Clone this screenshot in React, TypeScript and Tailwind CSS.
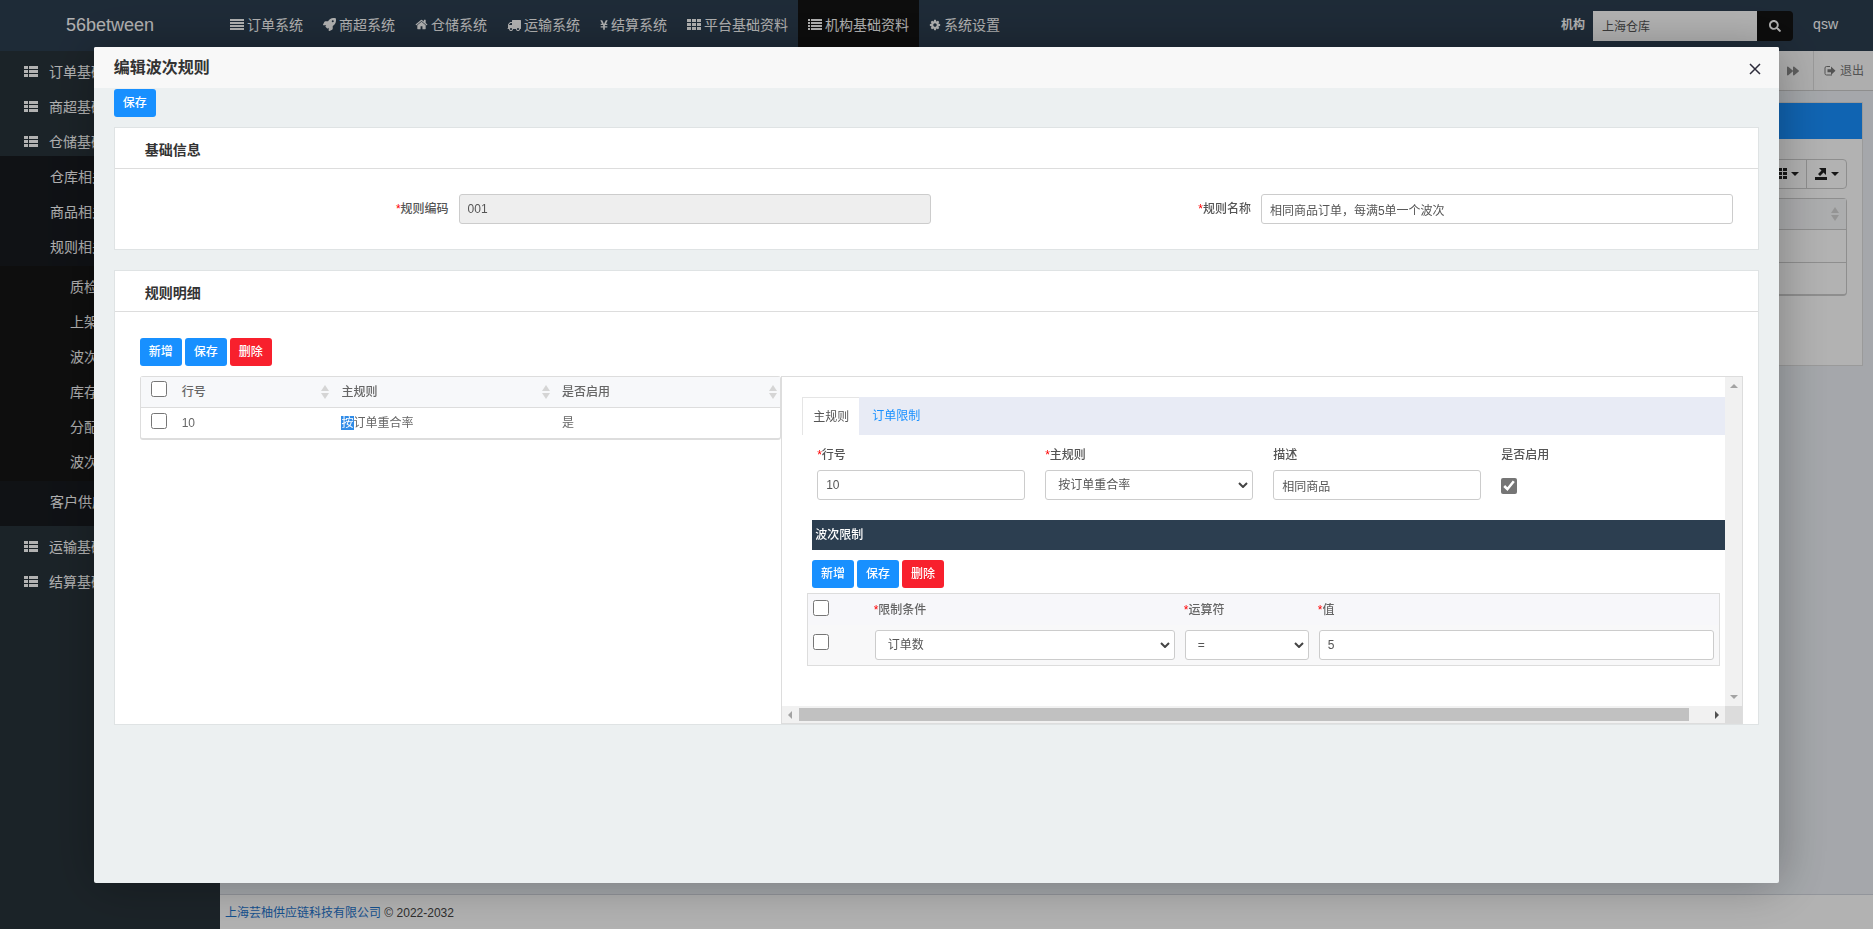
import React, { useState } from 'react';
import type { ReactNode } from 'react';
import { FaForward, FaRocket, FaSearch, FaYenSign } from 'react-icons/fa';

const ICON_PATHS = {
    home: 'M1472 992v480q0 26-19 45t-45 19h-384v-384h-256v384h-384q-26 0-45-19t-19-45v-480q0-1 .5-3t.5-3l575-474 575 474q1 2 1 6zm223-69l-62 74q-8 9-21 11h-3q-13 0-21-7l-692-577-692 577q-12 8-24 7-13-2-21-11l-62-74q-8-10-7-23.5t11-21.5l719-599q32-26 76-26t76 26l244 204v-195q0-14 9-23t23-9h192q14 0 23 9t9 23v408l219 182q10 8 11 21.5t-7 23.5z',
    truck: 'M640 1408q0-52-38-90t-90-38-90 38-38 90 38 90 90 38 90-38 38-90zm-384-512h384v-256h-158q-13 0-22 9l-195 195q-9 9-9 22v30zm1280 512q0-52-38-90t-90-38-90 38-38 90 38 90 90 38 90-38 38-90zm256-1088v1024q0 15-4 26.5t-13.5 18.5-16.5 11.5-23.5 6-22.5 2-25.5 0-22.5-.5q0 106-75 181t-181 75-181-75-75-181h-384q0 106-75 181t-181 75-181-75-75-181h-64q-3 0-22.5.5t-25.5 0-22.5-2-23.5-6-16.5-11.5-13.5-18.5-4-26.5q0-26 19-45t45-19v-320q0-8-.5-35t0-38 2.5-34.5 6.5-37 14-30.5 22.5-30l198-198q19-19 50.5-32t58.5-13h160v-192q0-26 19-45t45-19h1024q26 0 45 19t19 45z',
    cog: 'M1152 896q0-106-75-181t-181-75-181 75-75 181 75 181 181 75 181-75 75-181zm512-109v222q0 12-8 23t-20 13l-185 28q-19 54-39 91 35 50 107 138 10 12 10 25t-9 23q-27 37-99 108t-94 71q-12 0-26-9l-138-108q-44 23-91 38-16 136-29 186-7 28-36 28h-222q-14 0-24.5-8.5t-11.5-21.5l-28-184q-49-16-90-37l-141 107q-10 9-25 9-14 0-25-11-126-114-165-168-7-10-7-23 0-12 8-23 15-21 51-66.5t54-70.5q-27-50-41-99l-183-27q-13-2-21-12.5t-8-23.5v-222q0-12 8-23t19-13l186-28q14-46 39-92-40-57-107-138-10-12-10-24 0-10 9-23 26-36 98.5-107.5t94.5-71.5q13 0 26 10l138 107q44-23 91-38 16-136 29-186 7-28 36-28h222q14 0 24.5 8.5t11.5 21.5l28 184q49 16 90 37l142-107q9-9 24-9 13 0 25 10 129 119 165 170 7 8 7 22 0 12-8 23-15 21-51 66.5t-54 70.5q26 50 41 98l183 28q13 2 21 12.5t8 23.5z',
};

const GlyphIcon = ({ name, className }: { name: keyof typeof ICON_PATHS; className: string }) => (
    <svg viewBox="0 0 1792 1792" fill="currentColor" className={className}>
        <path d={ICON_PATHS[name]} />
    </svg>
);

const JustifyIcon = () => (
    <svg viewBox="0 0 14 14" fill="currentColor" className="size-[14px]">
        <path d="M0 1h14v2H0zM0 4h14v2H0zM0 7h14v2H0zM0 10h14v2H0z" />
    </svg>
);

const ListIcon = () => (
    <svg viewBox="0 0 14 14" fill="currentColor" className="size-[14px]">
        <path d="M0 1h2v2H0zM3 1h11v2H3zM0 4h2v2H0zM3 4h11v2H3zM0 7h2v2H0zM3 7h11v2H3zM0 10h2v2H0zM3 10h11v2H3z" />
    </svg>
);

const GridIcon = () => (
    <svg viewBox="0 0 14 14" fill="currentColor" className="size-[14px]">
        <path d="M0 1h4v3H0zM5 1h4v3H5zM10 1h4v3h-4zM0 5h4v3H0zM5 5h4v3H5zM10 5h4v3h-4zM0 9h4v3H0zM5 9h4v3H5zM10 9h4v3h-4z" />
    </svg>
);

const ThListIcon = () => (
    <svg viewBox="0 0 14 14" fill="currentColor" className="size-[14px]">
        <path d="M0 1h4v3H0zM5 1h9v3H5zM0 5h4v3H0zM5 5h9v3H5zM0 9h4v3H0zM5 9h9v3H5z" />
    </svg>
);

const SortIcon = () => (
    <svg viewBox="0 0 8 14" fill="currentColor" className="h-[14px] w-2 text-[#d5d5d5]">
        <path d="M4 0l4 6H0zM4 14l4-6H0z" />
    </svg>
);

const Caret = () => (
    <svg viewBox="0 0 8 4" fill="currentColor" className="h-1 w-2">
        <path d="M0 0h8L4 4z" />
    </svg>
);

const navItems: { label: string; icon: ReactNode; active?: boolean }[] = [
    { label: '订单系统', icon: <JustifyIcon /> },
    { label: '商超系统', icon: <FaRocket className="size-[13px]" /> },
    { label: '仓储系统', icon: <GlyphIcon name="home" className="size-[13px]" /> },
    { label: '运输系统', icon: <GlyphIcon name="truck" className="size-[14px]" /> },
    { label: '结算系统', icon: <FaYenSign className="h-3 w-2" /> },
    { label: '平台基础资料', icon: <GridIcon /> },
    { label: '机构基础资料', icon: <ListIcon />, active: true },
    { label: '系统设置', icon: <GlyphIcon name="cog" className="size-3" /> },
];

const itemClass = 'flex w-full items-center pt-[11px] pb-1 leading-5 whitespace-nowrap';

function MainItem({ label }: { label: string }) {
    return (
        <a href="#" className={`${itemClass} gap-[11px] pl-6`}>
            <ThListIcon />
            {label}
        </a>
    );
}

function SubItem({ label }: { label: string }) {
    return (
        <a href="#" className={`${itemClass} pl-[50px]`}>
            {label}
        </a>
    );
}

function Sidebar() {
    const rules = ['质检规则', '上架规则', '波次规则', '库存规则', '分配规则', '波次策略'];

    return (
        <aside className="w-[220px] shrink-0 bg-[#28333a] text-sm text-white">
            <MainItem label="订单基础" />
            <MainItem label="商超基础" />
            <MainItem label="仓储基础" />
            <div className="bg-[#171a1f] pb-[10px]">
                <SubItem label="仓库相关" />
                <SubItem label="商品相关" />
                <SubItem label="规则相关" />
                <div className="mt-[5px] bg-[#151515] pb-[5px]">
                    {rules.map(rule => (
                        <a key={rule} href="#" className={`${itemClass} pl-[70px]`}>
                            {rule}
                        </a>
                    ))}
                </div>
                <SubItem label="客户供应商" />
            </div>
            <MainItem label="运输基础" />
            <MainItem label="结算基础" />
        </aside>
    );
}

function TopNav() {
    return (
        <header className="flex h-[51px] shrink-0 items-stretch bg-[#2c3e50] text-sm text-white">
            <a href="#" className="flex w-[220px] items-center justify-center pb-[2px] text-lg">
                56between
            </a>
            <nav className="flex">
                {navItems.map(item => (
                    <a
                        key={item.label}
                        href="#"
                        className={
                            item.active
                                ? 'flex items-center gap-[3px] bg-[#131313] px-[10px] pb-[2px]'
                                : 'flex items-center gap-[3px] px-[10px] pb-[2px]'
                        }
                    >
                        {item.icon}
                        {item.label}
                    </a>
                ))}
            </nav>
            <div className="ml-auto flex items-center pr-[35px]">
                <label htmlFor="org" className="pr-2 pb-[2px] text-xs font-bold">
                    机构
                </label>
                <input
                    id="org"
                    defaultValue="上海仓库"
                    className="h-[30px] w-[164px] bg-white px-[9px] text-xs text-[#555]"
                />
                <button
                    aria-label="搜索"
                    className="flex h-[30px] w-9 items-center justify-center rounded-r-sm bg-[#131313]"
                >
                    <FaSearch className="size-3" />
                </button>
                <a href="#" className="pb-1 pl-5">
                    qsw
                </a>
            </div>
        </header>
    );
}

function Backdrop() {
    return (
        <div className="flex min-h-screen flex-col">
            <TopNav />
            <div className="flex grow">
                <Sidebar />
                <div className="flex grow flex-col bg-[#ecf0f5]">
                    <div className="flex h-10 justify-end border-b border-[#ccc] bg-[#fafafa] text-xs text-[#777]">
                        <button aria-label="向右" className="w-10 pl-[14px] text-[#888]">
                            <FaForward className="size-3" />
                        </button>
                        <a href="#" className="flex w-[60px] items-center gap-1 border-l border-[#ddd] pl-[10px]">
                            <svg viewBox="0 0 12 12" fill="none" stroke="currentColor" className="size-3">
                                <path d="M6 1.500H2.500A1.500 1.500 0 0 0 1 3v5.500A1.500 1.500 0 0 0 2.500 10H8" />
                                <path d="M3.500 4.300H7V1.500L11.500 5.700 7 9.900V7.200H3.500z" fill="currentColor" stroke="none" />
                            </svg>
                            退出
                        </a>
                    </div>
                    <section className="mx-[10px] mt-[11px] h-[264px] border border-[#ddd] bg-white">
                        <div className="h-9 bg-[#1890ff]" />
                        <div className="flex justify-end px-[15px] pt-5">
                            <div className="flex h-[30px] rounded-sm border border-[#ccc] text-[#222]">
                                <button aria-label="列" className="flex w-10 items-center justify-center gap-1">
                                    <GridIcon />
                                    <Caret />
                                </button>
                                <button
                                    aria-label="导出"
                                    className="flex w-10 items-center justify-center gap-1 border-l border-[#ccc]"
                                >
                                    <svg viewBox="0 0 12 12" fill="currentColor" className="size-3">
                                        <path d="M0 9h12v3H0zM4 0h7v7L8.500 4.500 5 8 3 6 6.500 2.500z" />
                                    </svg>
                                    <Caret />
                                </button>
                            </div>
                        </div>
                        <div className="mx-[15px] mt-[9px] rounded-sm border border-b-2 border-[#ccc]">
                            <div className="flex h-[30px] items-center justify-end bg-[#f7f8fa] pr-[7px]">
                                <SortIcon />
                            </div>
                            <div className="h-[33px] border-t border-[#ccc]" />
                            <div className="h-8 border-t border-[#ccc]" />
                        </div>
                    </section>
                    <footer className="mt-auto h-[35px] border-t border-[#d2d6de] bg-white px-[5px] text-xs leading-9 text-[#444]">
                        <a href="#" className="text-[#1e74cd]">
                            上海芸柚供应链科技有限公司
                        </a>{' '}
                        © 2022-2032
                    </footer>
                </div>
            </div>
        </div>
    );
}

function ActionButton({ label, danger }: { label: string; danger?: boolean }) {
    return (
        <button
            className={
                danger
                    ? 'h-7 w-[42px] rounded-[3px] bg-[#f8202d] text-xs font-medium text-white'
                    : 'h-7 w-[42px] rounded-[3px] bg-[#1890ff] text-xs font-medium text-white'
            }
        >
            {label}
        </button>
    );
}

const EditButtons = () => (
    <div className="flex gap-[3px]">
        <ActionButton label="新增" />
        <ActionButton label="保存" />
        <ActionButton label="删除" danger />
    </div>
);

const Required = () => <span className="text-[#f00]">*</span>;

const fieldClass =
    'h-[30px] w-full rounded-[3px] border border-[#ccc] bg-white px-2 text-xs text-[#555]';

const labelClass = 'block pt-[11px] pb-[6px] leading-[18px] font-medium';

function SelectField({ id, options, label }: { id: string; options: string[]; label?: string }) {
    return (
        <div className="relative">
            <select id={id} aria-label={label} className={`${fieldClass} appearance-none pl-3`}>
                {options.map(option => (
                    <option key={option}>{option}</option>
                ))}
            </select>
            <svg
                viewBox="0 0 10 6"
                fill="none"
                stroke="#444"
                strokeWidth="2"
                className="pointer-events-none absolute top-3 right-[5px] h-[6px] w-[10px]"
            >
                <path d="M1 1l4 4 4-4" />
            </svg>
        </div>
    );
}

function CheckBox({ label }: { label: string }) {
    return <input type="checkbox" aria-label={label} className="block size-4" />;
}

function Card({ title, children }: { title: string; children: ReactNode }) {
    return (
        <section className="border border-[#dfe3e4] bg-white">
            <h2 className="h-[41px] border-b border-[#ddd] pl-[30px] text-sm leading-[44px] font-bold text-[#333]">
                {title}
            </h2>
            {children}
        </section>
    );
}

function BasicInfo() {
    return (
        <Card title="基础信息">
            <div className="grid h-20 grid-cols-2 pt-[25px] pr-[10px] pl-[29px]">
                <div className="flex items-start pr-[15px]">
                    <label htmlFor="code" className="w-[40%] shrink-0 pr-[10px] text-right leading-[30px] font-medium">
                        <Required />
                        规则编码
                    </label>
                    <input id="code" readOnly defaultValue="001" className={`${fieldClass} bg-[#eee]!`} />
                </div>
                <div className="flex items-start pr-[15px]">
                    <label htmlFor="name" className="w-[40%] shrink-0 pr-[10px] text-right leading-[30px] font-medium">
                        <Required />
                        规则名称
                    </label>
                    <input id="name" defaultValue="相同商品订单，每满5单一个波次" className={fieldClass} />
                </div>
            </div>
        </Card>
    );
}

function RuleTable() {
    return (
        <div className="rounded-[3px] border border-b-2 border-[#ddd]">
            <table className="w-full table-fixed text-left text-[#666]">
                <colgroup>
                    <col className="w-[5%]" />
                    <col className="w-[25%]" />
                    <col className="w-[34.5%]" />
                    <col />
                </colgroup>
                <thead className="bg-[#f7f8fa]">
                    <tr className="h-[30px] border-b border-[#ddd]">
                        <th className="pb-[6px] pl-[10px]">
                            <CheckBox label="全选" />
                        </th>
                        {['行号', '主规则', '是否启用'].map(title => (
                            <th key={title} className="pr-[3px] pl-[9px] font-medium">
                                <div className="flex items-center justify-between">
                                    {title}
                                    <SortIcon />
                                </div>
                            </th>
                        ))}
                    </tr>
                </thead>
                <tbody>
                    <tr className="h-[31px]">
                        <td className="pb-1 pl-[10px]">
                            <CheckBox label="选择第10行" />
                        </td>
                        <td className="pl-[9px]">10</td>
                        <td className="pl-[9px]">
                            <span className="bg-[#308ce8] text-white">按</span>
                            订单重合率
                        </td>
                        <td className="pl-[9px]">是</td>
                    </tr>
                </tbody>
            </table>
        </div>
    );
}

function LimitTable() {
    return (
        <table className="w-full table-fixed border border-[#ddd] bg-[#f8f8f9] text-left text-[#666]">
            <colgroup>
                <col className="w-[62px]" />
                <col className="w-[34%]" />
                <col className="w-[134px]" />
                <col />
            </colgroup>
            <thead className="bg-[#f7f7fa]">
                <tr className="h-[31px]">
                    <th className="pb-1 pl-[5px]">
                        <CheckBox label="全选限制" />
                    </th>
                    {['限制条件', '运算符', '值'].map(title => (
                        <th key={title} className="pl-1 font-medium">
                            <Required />
                            {title}
                        </th>
                    ))}
                </tr>
            </thead>
            <tbody>
                <tr className="h-[41px]">
                    <td className="pb-[6px] pl-[5px]">
                        <CheckBox label="选择限制" />
                    </td>
                    <td className="px-[5px]">
                        <SelectField id="condition" label="限制条件" options={['订单数', '商品数']} />
                    </td>
                    <td className="px-[5px]">
                        <SelectField id="operator" label="运算符" options={['=', '<=', '>=']} />
                    </td>
                    <td className="px-[5px]">
                        <input aria-label="值" defaultValue="5" className={fieldClass} />
                    </td>
                </tr>
            </tbody>
        </table>
    );
}

function RuleDetail() {
    const [tab, setTab] = useState('主规则');
    const [enabled, setEnabled] = useState(true);

    return (
        <div className="pt-5 pl-5">
            <div className="flex h-[38px] bg-[#e8ebf5]">
                {['主规则', '订单限制'].map(name => (
                    <button
                        key={name}
                        onClick={() => setTab(name)}
                        className={
                            name === tab
                                ? 'border-t border-l border-[#e5e5e5] bg-white px-[10px]'
                                : 'px-[13px] text-[#1890ff]'
                        }
                    >
                        {name}
                    </button>
                ))}
            </div>
            <div className="grid grid-cols-4 pr-[6px] pl-[5px]">
                <div className="px-[10px]">
                    <label htmlFor="line" className={labelClass}>
                        <Required />
                        行号
                    </label>
                    <input id="line" defaultValue="10" className={fieldClass} />
                </div>
                <div className="px-[10px]">
                    <label htmlFor="rule" className={labelClass}>
                        <Required />
                        主规则
                    </label>
                    <SelectField id="rule" options={['按订单重合率']} />
                </div>
                <div className="px-[10px]">
                    <label htmlFor="desc" className={labelClass}>
                        描述
                    </label>
                    <input id="desc" defaultValue="相同商品" className={fieldClass} />
                </div>
                <div className="px-[10px]">
                    <label htmlFor="enabled" className={labelClass}>
                        是否启用
                    </label>
                    <input
                        id="enabled"
                        type="checkbox"
                        checked={enabled}
                        onChange={e => setEnabled(e.target.checked)}
                        className="mt-2 block size-4 accent-[#757575]"
                    />
                </div>
            </div>
            <h3 className="mt-5 ml-[10px] h-[30px] bg-[#2c3e50] pl-[3px] leading-[30px] font-medium text-white">
                波次限制
            </h3>
            <div className="pt-[10px] pb-[5px] pl-[10px]">
                <EditButtons />
            </div>
            <div className="pr-[5px] pb-10 pl-[5px]">
                <LimitTable />
            </div>
        </div>
    );
}

function ScrollPane({ children }: { children: ReactNode }) {
    return (
        <div className="grid grid-cols-[minmax(0,1fr)_17px] grid-rows-[minmax(0,1fr)_17px] border border-[#ddd]">
            <div>{children}</div>
            <div className="flex flex-col items-center justify-between bg-[#f1f1f1] py-[7px] text-[#a3a3a3]">
                <svg viewBox="0 0 8 4" fill="currentColor" className="h-1 w-2">
                    <path d="M4 0l4 4H0z" />
                </svg>
                <Caret />
            </div>
            <div className="flex items-center bg-[#f1f1f1]">
                <svg viewBox="0 0 17 8" className="h-2 w-[17px]" fill="#a3a3a3">
                    <path d="M10 0v8L6 4z" />
                </svg>
                <div className="mr-[19px] h-[13px] grow bg-[#c1c1c1]" />
                <svg viewBox="0 0 17 8" className="h-2 w-[17px]" fill="#505050">
                    <path d="M7 0v8l4-4z" />
                </svg>
            </div>
            <div className="bg-[#dcdcdc]" />
        </div>
    );
}

function EditDialog() {
    return (
        <div
            role="dialog"
            aria-label="编辑波次规则"
            className="flex h-[90%] w-[90%] flex-col overflow-hidden rounded-xs bg-[#ecf0f1] text-xs text-[#555] shadow-[1px_1px_50px_rgba(0,0,0,0.3)]"
        >
            <div className="flex h-[41px] shrink-0 items-center justify-between bg-[#f8f8f8] pr-[18px] pl-5">
                <h1 className="text-base font-bold text-[#333]">编辑波次规则</h1>
                <button aria-label="关闭" className="pt-[2px]">
                    <svg viewBox="0 0 12 12" stroke="#2d2c3b" strokeWidth="1.500" className="size-3">
                        <path d="M1 1l10 10M11 1L1 11" />
                    </svg>
                </button>
            </div>
            <div className="px-5 pt-px">
                <ActionButton label="保存" />
                <div className="mt-[10px] flex flex-col gap-5">
                    <BasicInfo />
                    <Card title="规则明细">
                        <div className="pt-[26px] pr-[15px] pl-[25px]">
                            <EditButtons />
                            <div className="mt-[10px] grid grid-cols-[40%_60%]">
                                <div>
                                    <RuleTable />
                                </div>
                                <ScrollPane>
                                    <RuleDetail />
                                </ScrollPane>
                            </div>
                        </div>
                    </Card>
                </div>
            </div>
        </div>
    );
}

export default function App() {
    return (
        <div className="relative font-['Liberation_Sans','Noto_Sans_CJK_SC',sans-serif]">
            <Backdrop />
            <div className="fixed inset-0 flex items-center justify-center bg-black/30 pt-px">
                <EditDialog />
            </div>
        </div>
    );
}
